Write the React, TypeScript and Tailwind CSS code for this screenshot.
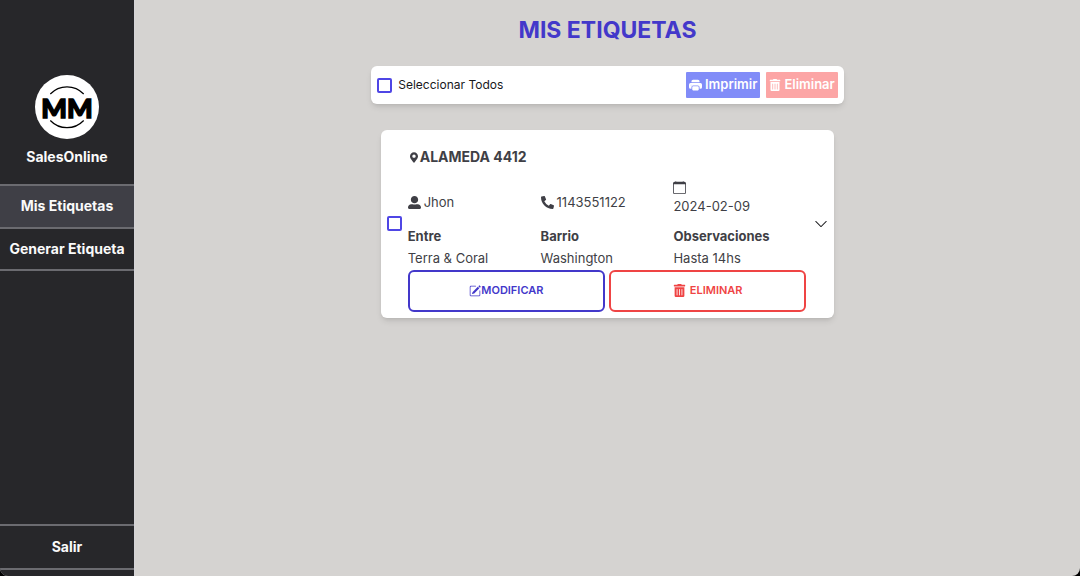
import React, { useState } from "react";
import { BsCalendar, BsChevronDown, BsPencilSquare, BsPrinterFill } from "react-icons/bs";
import { FaMapMarkerAlt, FaPhoneAlt, FaTrashAlt, FaUserAlt } from "react-icons/fa";

function Logo() {
  return (
    <svg viewBox="0 0 64 64" className="size-16" role="img" aria-label="MM">
      <circle cx="32" cy="32" r="32" fill="#fff" />
      <path d="M15.3 19a23 23 0 0 1 33.4 0M15.3 45.500a23 23 0 0 0 33.400 0" fill="none" stroke="#000" strokeWidth="1.200" />
      <text x="32" y="42.500" textAnchor="middle" fill="#000" stroke="#000" strokeWidth="1.500" className="font-['Lato',sans-serif] text-[27px] font-black">
        MM
      </text>
    </svg>
  );
}

function Check({ label, checked, onChange }: { label: string; checked: boolean; onChange: () => void }) {
  return (
    <input
      type="checkbox"
      aria-label={label}
      checked={checked}
      onChange={onChange}
      className="size-[15px] shrink-0 appearance-none rounded-[2px] border-2 border-[#4f46e5] bg-white checked:bg-[#4f46e5]"
    />
  );
}

function Field({ title, text }: { title: string; text: string }) {
  return (
    <div>
      <dt className="font-bold">{title}</dt>
      <dd>{text}</dd>
    </div>
  );
}

export default function App() {
  const [selected, setSelected] = useState(false);
  const toggle = () => setSelected((value) => !value);

  return (
    <div className="min-h-screen bg-black font-['Inter',sans-serif] text-[13px] text-[#3f3f46]">
      <div className="flex min-h-screen overflow-hidden rounded-b-lg bg-[#d5d3d1]">
        <aside className="flex w-[135px] shrink-0 flex-col border-r border-zinc-300 bg-[#27272a] pb-1.5 text-center text-sm font-bold text-zinc-50">
          <div className="flex flex-col items-center gap-2 pt-[75px] pb-[17px]">
            <Logo />
            <p>SalesOnline</p>
          </div>
          <nav className="flex flex-1 flex-col">
            <a href="#etiquetas" className="border-y-2 border-[#6b6b70] bg-[#3f3f46] pt-[10px] pb-[11px]">
              Mis Etiquetas
            </a>
            <a href="#generar" className="border-b-2 border-[#6b6b70] py-[10px] whitespace-nowrap">
              Generar Etiqueta
            </a>
            <a href="#salir" className="mt-auto border-y-2 border-[#6b6b70] py-[11px]">
              Salir
            </a>
          </nav>
        </aside>

        <main className="flex flex-1 flex-col items-center">
          <h1 className="pt-3 text-[23px] leading-9 font-bold text-[#4338ca]">MIS ETIQUETAS</h1>

          <section className="mt-[18px] flex w-1/2 items-center justify-between rounded-md bg-white p-1.5 shadow-md">
            <label className="flex items-center gap-1.5 text-xs text-zinc-900">
              <Check label="Seleccionar Todos" checked={selected} onChange={toggle} />
              Seleccionar Todos
            </label>
            <div className="flex gap-1.5 font-semibold text-white">
              <button type="button" className="flex h-[26px] items-center gap-[3px] rounded-[1px] bg-[#818cf8] px-[3px]">
                <BsPrinterFill />
                Imprimir
              </button>
              <button type="button" className="flex h-[26px] items-center gap-[3px] rounded-[1px] bg-[#fca5a5] px-[3px]">
                <FaTrashAlt className="size-3" />
                Eliminar
              </button>
            </div>
          </section>

          <article className="mt-[26px] flex w-[48%] items-center gap-1.5 rounded-md bg-white p-1.5 shadow-md">
            <Check label="Seleccionar ALAMEDA 4412" checked={selected} onChange={toggle} />
            <div className="flex-1">
              <h2 className="mt-[9px] flex items-center gap-0.5 pl-0.5 text-sm leading-6 font-bold">
                <FaMapMarkerAlt className="h-[11px] w-2" />
                ALAMEDA 4412
              </h2>
              <div className="mt-3 grid grid-cols-3 items-end">
                <p className="flex items-center gap-[3px] pb-1">
                  <FaUserAlt />
                  Jhon
                </p>
                <p className="flex items-center gap-[3px] pb-1">
                  <FaPhoneAlt />
                  1143551122
                </p>
                <p>
                  <BsCalendar className="mb-[3px]" />
                  2024-02-09
                </p>
              </div>
              <dl className="mt-2 grid grid-cols-3 leading-[22px]">
                <Field title="Entre" text="Terra & Coral" />
                <Field title="Barrio" text="Washington" />
                <Field title="Observaciones" text="Hasta 14hs" />
              </dl>
              <div className="mt-px grid grid-cols-2 gap-1 text-[11px] font-semibold">
                <button type="button" className="flex h-[42px] items-center justify-center rounded-md border-2 border-[#4338ca] text-[#4338ca]">
                  <BsPencilSquare className="size-3" />
                  MODIFICAR
                </button>
                <button type="button" className="flex h-[42px] items-center justify-center gap-1 rounded-md border-2 border-[#ef4444] text-[#ef4444]">
                  <FaTrashAlt className="size-[13px]" />
                  ELIMINAR
                </button>
              </div>
            </div>
            <button type="button" aria-label="Desplegar" className="ml-0.5 text-zinc-900">
              <BsChevronDown className="size-[14px]" />
            </button>
          </article>
        </main>
      </div>
    </div>
  );
}
